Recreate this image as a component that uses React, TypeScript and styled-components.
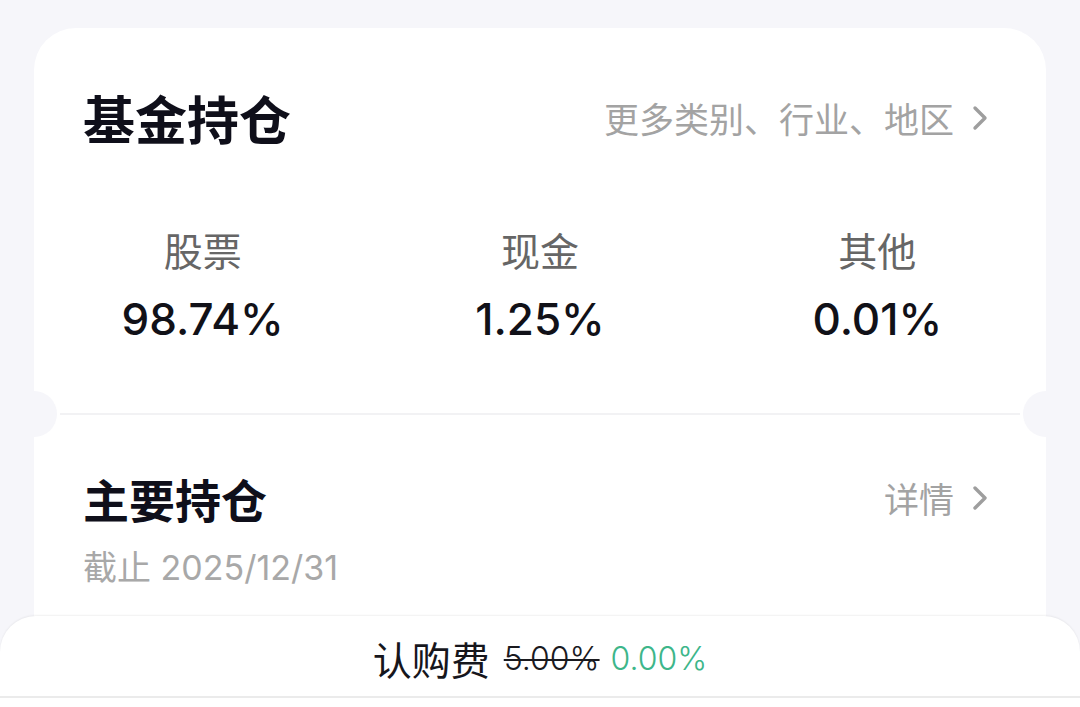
import React from "react";
import styled, { createGlobalStyle } from "styled-components";

const Global = createGlobalStyle`
  html, body {
    margin: 0;
    padding: 0;
    background: #f6f6fa;
    font-family: "Inter", "Noto Sans CJK SC", sans-serif;
    -webkit-font-smoothing: antialiased;
  }
  * { box-sizing: border-box; }
`;

const Page = styled.div`
  width: 1080px;
  height: 707px;
  overflow: hidden;
  padding: 28px 34px 0;
  position: relative;
`;

const Card = styled.div`
  background: #ffffff;
  border-radius: 42px 42px 0 0;
  position: relative;
`;

const Section = styled.section<{ $top: number; $bottom: number }>`
  padding: ${(p) => p.$top}px 58px ${(p) => p.$bottom}px 49px;
`;

const Header = styled.div`
  display: flex;
  align-items: center;
  justify-content: space-between;
`;

const Title = styled.h2<{ $size: number }>`
  margin: 0;
  font-family: "Noto Sans CJK SC", sans-serif;
  font-size: ${(p) => p.$size}px;
  line-height: 60px;
  font-weight: 700;
  color: #0f0f1a;
`;

const More = styled.div`
  display: flex;
  align-items: center;
  gap: 18px;
  font-family: "Noto Sans CJK SC", sans-serif;
  font-size: 35px;
  line-height: 48px;
  color: #a3a3a3;
`;

const Stats = styled.div`
  display: grid;
  grid-template-columns: repeat(3, 1fr);
  margin: 77px -58px 0 -49px;
`;

const Stat = styled.div`
  display: flex;
  flex-direction: column;
  align-items: center;
`;

const StatLabel = styled.div`
  font-family: "Noto Sans CJK SC", sans-serif;
  font-size: 39px;
  line-height: 48px;
  color: #666666;
`;

const StatValue = styled.div`
  margin-top: 18px;
  font-size: 44px;
  line-height: 56px;
  font-weight: 500;
  color: #111118;
`;

const Divider = styled.div`
  position: relative;
  height: 2px;
  margin: 0 26px;
  background: #f2f2f4;
`;

const Notch = styled.span<{ $side: "left" | "right" }>`
  position: absolute;
  top: -22px;
  ${(p) => (p.$side === "left" ? "left: -49px;" : "right: -49px;")}
  width: 46px;
  height: 46px;
  border-radius: 50%;
  background: #f6f6fa;
`;

const DateText = styled.div`
  margin-top: 18px;
  font-size: 34px;
  line-height: 44px;
  color: #a8a8a8;
`;

const Filler = styled.div`
  height: 140px;
`;

const BottomBar = styled.div`
  position: absolute;
  left: 0;
  right: 0;
  bottom: 0;
  height: 91px;
  background: #ffffff;
  border-radius: 36px 36px 0 0;
  box-shadow: 0 -1px 2px rgba(0, 0, 0, 0.06);
`;

const FeeRow = styled.div`
  height: 82px;
  padding-top: 4px;
  display: flex;
  align-items: center;
  justify-content: center;
  border-bottom: 2px solid #ebebeb;
  color: #16161c;
`;

const FeeLabel = styled.span`
  font-family: "Noto Sans CJK SC", sans-serif;
  font-size: 39px;
  margin-right: 14px;
`;

const FeeNum = styled.span<{ $old?: boolean }>`
  font-size: 32px;
  font-weight: 300;
  color: ${(p) => (p.$old ? "#1a1a1f" : "#3db68a")};
  text-decoration: ${(p) => (p.$old ? "line-through" : "none")};
  text-decoration-thickness: 2px;
  margin-right: ${(p) => (p.$old ? "11px" : "0")};
`;

const Chevron = () => (
  <svg width="16" height="26" viewBox="0 0 16 26" fill="none">
    <polyline
      points="3,3 13,13 3,23"
      stroke="#9e9e9e"
      strokeWidth="3.4"
      strokeLinecap="round"
      strokeLinejoin="round"
    />
  </svg>
);

const stats = [
  { label: "股票", value: "98.74%" },
  { label: "现金", value: "1.25%" },
  { label: "其他", value: "0.01%" },
];

export default function App() {
  return (
    <>
      <Global />
      <Page>
        <Card>
          <Section $top={60} $bottom={66}>
            <Header>
              <Title $size={52}>基金持仓</Title>
              <More>
                更多类别、行业、地区
                <Chevron />
              </More>
            </Header>
            <Stats>
              {stats.map((s) => (
                <Stat key={s.label}>
                  <StatLabel>{s.label}</StatLabel>
                  <StatValue>{s.value}</StatValue>
                </Stat>
              ))}
            </Stats>
          </Section>
          <Divider>
            <Notch $side="left" />
            <Notch $side="right" />
          </Divider>
          <Section $top={53} $bottom={0}>
            <Header>
              <Title $size={46}>主要持仓</Title>
              <More>
                详情
                <Chevron />
              </More>
            </Header>
            <DateText>截止 2025/12/31</DateText>
            <Filler />
          </Section>
        </Card>
        <BottomBar>
          <FeeRow>
            <FeeLabel>认购费</FeeLabel>
            <FeeNum $old>5.00%</FeeNum>
            <FeeNum>0.00%</FeeNum>
          </FeeRow>
        </BottomBar>
      </Page>
    </>
  );
}
